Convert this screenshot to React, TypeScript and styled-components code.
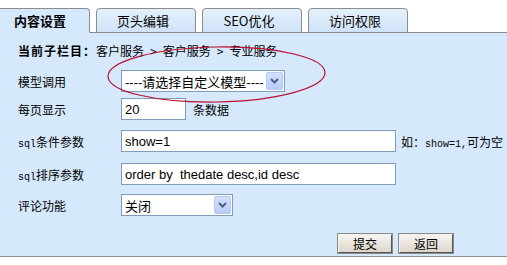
import styled, { createGlobalStyle } from 'styled-components';

const GlobalStyle = createGlobalStyle`
  html, body {
    margin: 0;
    padding: 0;
    background: #ffffff;
  }
  body {
    font-family: "SimSun", "Noto Sans CJK SC", sans-serif;
    font-size: 12px;
    color: #000000;
  }
`;

const tabs = ['内容设置', '页头编辑', 'SEO优化', '访问权限'];

const Chevron = () => (
  <svg width="9" height="6" viewBox="0 0 9 6">
    <path d="M1 1 L4.5 4.5 L8 1" fill="none" stroke="#4d6185" strokeWidth="2" />
  </svg>
);

const App = () => {
  return (
    <Page>
      <GlobalStyle />
      <TabBar>
        {tabs.map((t, i) => (
          <Tab key={t} $active={i === 0}>
            {t}
          </Tab>
        ))}
      </TabBar>
      <Panel>
        <Crumb>
          <b>当前子栏目：</b>客户服务<Sep>&gt;</Sep>客户服务<Sep>&gt;</Sep>专业服务
        </Crumb>
        <Row $top={12}>
          <Label>模型调用</Label>
          <Select $width={164}>
            <span>----请选择自定义模型----</span>
            <Arrow>
              <Chevron />
            </Arrow>
          </Select>
        </Row>
        <Row $top={6}>
          <Label>每页显示</Label>
          <TextInput $width={65} defaultValue="20" />
          <Hint $gap={7}>条数据</Hint>
        </Row>
        <Row $top={10}>
          <Label>
            <Latin>sql</Latin>条件参数
          </Label>
          <TextInput $width={275} defaultValue="show=1" />
          <Hint $gap={5}>
            如：<Latin>show=1,</Latin>可为空
          </Hint>
        </Row>
        <Row $top={11}>
          <Label>
            <Latin>sql</Latin>排序参数
          </Label>
          <TextInput $width={275} defaultValue="order by  thedate desc,id desc" />
        </Row>
        <Row $top={9}>
          <Label>评论功能</Label>
          <Select $width={112}>
            <span>关闭</span>
            <Arrow>
              <Chevron />
            </Arrow>
          </Select>
        </Row>
        <Actions>
          <Button>提交</Button>
          <Button>返回</Button>
        </Actions>
      </Panel>
      <Circle width="507" height="265" viewBox="0 0 507 265">
        <ellipse
          cx="216.5"
          cy="74.5"
          rx="108.5"
          ry="27.5"
          fill="none"
          stroke="#b8102e"
          strokeWidth="1.2"
          transform="rotate(-1 216.5 74.5)"
        />
      </Circle>
    </Page>
  );
};
export default App;

const Page = styled.div`
  position: relative;
  width: 507px;
  height: 265px;
  overflow: hidden;
`;
const TabBar = styled.div`
  display: flex;
  gap: 6px;
  padding-top: 8px;
  margin-left: -10px;
  border-bottom: 1px solid #8c8c8c;
  height: 24px;
`;
const Tab = styled.div<{ $active?: boolean }>`
  box-sizing: border-box;
  width: 100px;
  height: 25px;
  border: 1px solid #8c8c8c;
  border-bottom-color: ${(p) => (p.$active ? '#d6e8fb' : '#8c8c8c')};
  border-radius: 4px 4px 0 0;
  background: ${(p) => (p.$active ? '#d6e8fb' : 'linear-gradient(#e4f0fc, #cfe3f8)')};
  font-weight: ${(p) => (p.$active ? 'bold' : 'normal')};
  font-size: 13px;
  line-height: 24px;
  text-align: center;
  padding-right: ${(p) => (p.$active ? 0 : 6)}px;
`;
const Panel = styled.div`
  background: #d6e8fb;
  height: 224px;
  border-bottom: 1px solid #8c8c8c;
  padding: 0 0 0 18px;
  box-sizing: border-box;
  display: flex;
  flex-direction: column;
`;
const Crumb = styled.div`
  margin-top: 11px;
  font-size: 12px;
  line-height: 14px;
  white-space: nowrap;
  b {
    font-weight: bold;
    letter-spacing: 1px;
  }
`;
const Sep = styled.span`
  margin: 0 6px;
`;
const Latin = styled.span`
  font-family: "Liberation Mono", monospace;
  font-size: 10px;
`;
const Row = styled.div<{ $top: number }>`
  display: flex;
  align-items: center;
  margin-top: ${(p) => p.$top}px;
  height: 22px;
`;
const Label = styled.div`
  flex: none;
  width: 103px;
  font-size: 12px;
`;
const Select = styled.div<{ $width: number }>`
  flex: none;
  box-sizing: border-box;
  width: ${(p) => p.$width}px;
  height: 22px;
  border: 1px solid #7f9db9;
  background: #ffffff;
  display: flex;
  align-items: center;
  justify-content: space-between;
  padding: 1px 1px 1px 3px;
  font-family: "Liberation Sans", "Noto Sans CJK SC", sans-serif;
  font-size: 13px;
`;
const Arrow = styled.div`
  box-sizing: border-box;
  width: 17px;
  height: 18px;
  border: 1px solid #b8cbf4;
  border-radius: 2px;
  background: linear-gradient(#d4e0fd, #b9cdf9);
  display: flex;
  align-items: center;
  justify-content: center;
`;
const TextInput = styled.input<{ $width: number }>`
  flex: none;
  box-sizing: border-box;
  width: ${(p) => p.$width}px;
  height: 22px;
  border: 1px solid #7f9db9;
  background: #ffffff;
  padding: 0 3px;
  margin: 0;
  font-family: "Liberation Sans", "Noto Sans CJK SC", sans-serif;
  font-size: 13px;
  color: #000;
  outline: none;
`;
const Hint = styled.span<{ $gap: number }>`
  flex: none;
  white-space: nowrap;
  margin-left: ${(p) => p.$gap}px;
  font-size: 12px;
`;
const Actions = styled.div`
  display: flex;
  gap: 7px;
  margin-top: 18px;
  padding-left: 320px;
`;
const Button = styled.button`
  box-sizing: border-box;
  width: 54px;
  height: 19px;
  padding: 0;
  border: 1px solid;
  border-color: #f4f2ec #555 #555 #f4f2ec;
  outline: 1px solid #8a8a8a;
  background: linear-gradient(#f6f4ef, #dcd6ca);
  font-family: "SimSun", "Noto Sans CJK SC", sans-serif;
  font-size: 12px;
  color: #000;
`;
const Circle = styled.svg`
  position: absolute;
  left: 0;
  top: 0;
  pointer-events: none;
`;
